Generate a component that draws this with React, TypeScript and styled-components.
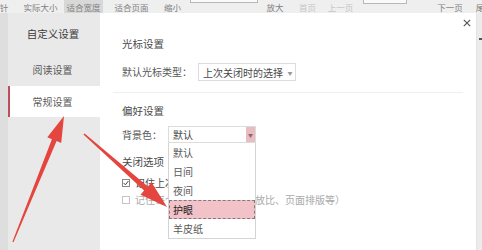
import React from "react";
import styled, { createGlobalStyle } from "styled-components";

const Global = createGlobalStyle`
  html, body { margin: 0; padding: 0; width: 482px; height: 250px; overflow: hidden; background: #e2e2e2; }
  body { font-family: "Noto Sans CJK SC", "Noto Sans", sans-serif; }
`;

const Page = styled.div`
  position: relative;
  width: 482px;
  height: 250px;
  display: flex;
  flex-direction: column;
  overflow: hidden;
`;

const Toolbar = styled.div`
  height: 13px;
  flex: none;
  display: flex;
  align-items: flex-start;
  background: #efefef;
  overflow: hidden;
`;

const ToolItem = styled.div<{ $w: number; $ml?: number; $dim?: boolean; $active?: boolean }>`
  width: ${(p) => p.$w}px;
  margin-left: ${(p) => p.$ml ?? 0}px;
  flex: none;
  height: 13px;
  font-size: 8.5px;
  line-height: 13px;
  padding-top: 1px;
  box-sizing: border-box;
  display: flex;
  justify-content: center;
  white-space: nowrap;
  color: ${(p) => (p.$dim ? "#c6c6c6" : "#808080")};
  background: ${(p) => (p.$active ? "#d8d8d8" : "transparent")};
`;

const ToolBox = styled.div<{ $w: number; $ml: number; $h: number }>`
  width: ${(p) => p.$w}px;
  height: ${(p) => p.$h}px;
  margin-left: ${(p) => p.$ml}px;
  flex: none;
  box-sizing: border-box;
  border: 1px solid #b8b8b8;
  border-top: none;
  background: #fafafa;
`;

const Body = styled.div`
  flex: 1;
  display: flex;
  min-height: 0;
`;

const Gutter = styled.div`
  width: 8px;
  flex: none;
  background: #dedede;
`;

const Dialog = styled.div`
  width: 468px;
  flex: none;
  display: flex;
  background: #fff;
  border-right: 1px solid #e2e2e2;
`;

const RightStrip = styled.div`
  flex: 1;
  background: #ececec;
  padding-top: 25px;
`;

const Tick = styled.div`
  width: 3px;
  height: 2px;
  margin-left: 2px;
  background: #555;
`;

const Sidebar = styled.div`
  width: 92px;
  flex: none;
  background: #e9e9e9;
  display: flex;
  flex-direction: column;
`;

const SideTitle = styled.div`
  height: 41px;
  display: flex;
  align-items: center;
  justify-content: center;
  padding-right: 2px;
  font-size: 10.5px;
  color: #3a3a3a;
`;

const SideItem = styled.div<{ $active?: boolean }>`
  height: 31.5px;
  display: flex;
  align-items: center;
  justify-content: center;
  box-sizing: border-box;
  padding-right: 5px;
  font-size: 10px;
  color: #5a5a5a;
  background: ${(p) => (p.$active ? "#fff" : "transparent")};
  border-left: 2px solid ${(p) => (p.$active ? "#b9505b" : "transparent")};
`;

const Content = styled.div`
  flex: 1;
  position: relative;
  padding: 24px 0 0 22px;
  display: flex;
  flex-direction: column;
  align-items: flex-start;
`;

const Close = styled.div`
  position: absolute;
  top: 6px;
  right: 5px;
  width: 8px;
  height: 8px;
  display: flex;
`;

const Heading = styled.div<{ $mt?: number }>`
  margin-top: ${(p) => p.$mt ?? 0}px;
  font-size: 10.5px;
  line-height: 14px;
  color: #4a4a4a;
`;

const Row = styled.div<{ $mt: number }>`
  margin-top: ${(p) => p.$mt}px;
  display: flex;
  align-items: center;
  gap: 6px;
`;

const Label = styled.span`
  font-size: 10px;
  line-height: 14px;
  color: #585858;
`;

const Separator = styled.div`
  margin: 11px 0 0 -9px;
  width: 350px;
  height: 1px;
  background: #efefef;
`;

const SelectWrap = styled.div`
  position: relative;
`;

const SelectBox = styled.div<{ $w: number; $h: number }>`
  width: ${(p) => p.$w}px;
  height: ${(p) => p.$h}px;
  box-sizing: border-box;
  border: 1px solid #dcdcdc;
  display: flex;
  align-items: center;
  padding-left: 4px;
  font-size: 10px;
  color: #484848;
  background: #fff;
`;

const SelectText = styled.span`
  flex: 1;
  white-space: nowrap;
`;

const Caret = styled.span<{ $pink?: boolean }>`
  align-self: stretch;
  width: ${(p) => (p.$pink ? 9 : 10)}px;
  display: flex;
  align-items: center;
  justify-content: center;
  font-size: 5px;
  color: ${(p) => (p.$pink ? "#8a6a6e" : "#999")};
  background: ${(p) => (p.$pink ? "#e9bcc2" : "transparent")};
`;

const DropList = styled.div`
  position: absolute;
  top: 100%;
  left: 0;
  width: 88px;
  box-sizing: border-box;
  border: 1px solid #d4d4d4;
  border-top: none;
  background: #fff;
  z-index: 2;
`;

const DropItem = styled.div<{ $sel?: boolean }>`
  height: 19px;
  box-sizing: border-box;
  display: flex;
  align-items: center;
  padding-left: 3px;
  font-size: 10px;
  color: ${(p) => (p.$sel ? "#222" : "#585858")};
  background: ${(p) => (p.$sel ? "#f1c3c9" : "#fff")};
  border: 1px ${(p) => (p.$sel ? "dashed #8c7478" : "solid transparent")};
`;

const CheckRow = styled.div<{ $mt?: number; $dim?: boolean }>`
  margin-top: ${(p) => p.$mt ?? 0}px;
  height: 17px;
  display: flex;
  align-items: center;
  gap: 5px;
  font-size: 10px;
  white-space: nowrap;
  color: ${(p) => (p.$dim ? "#aaa" : "#484848")};
`;

const Box = styled.span<{ $dim?: boolean }>`
  width: 8px;
  height: 8px;
  box-sizing: border-box;
  border: 1px solid ${(p) => (p.$dim ? "#c4c4c4" : "#888")};
  display: inline-flex;
  align-items: center;
  justify-content: center;
  background: #fff;
`;

const Overlay = styled.svg`
  position: absolute;
  left: 0;
  top: 0;
  width: 482px;
  height: 250px;
  pointer-events: none;
  z-index: 10;
`;

export default function App() {
  return (
    <Page>
      <Global />
      <Toolbar>
        <ToolItem $w={8}>针</ToolItem>
        <ToolItem $w={47} $ml={9}>实际大小</ToolItem>
        <ToolItem $w={39} $active>适合宽度</ToolItem>
        <ToolItem $w={57}>适合页面</ToolItem>
        <ToolItem $w={25}>缩小</ToolItem>
        <ToolBox $w={68} $ml={5} $h={3} />
        <ToolItem $w={34}>放大</ToolItem>
        <ToolItem $w={31} $dim>首页</ToolItem>
        <ToolItem $w={35} $dim>上一页</ToolItem>
        <ToolBox $w={44} $ml={5} $h={4} />
        <ToolItem $w={26} $ml={30}>下一页</ToolItem>
        <ToolItem $w={10} $ml={12}>尾</ToolItem>
      </Toolbar>
      <Body>
        <Gutter />
        <Dialog>
          <Sidebar>
            <SideTitle>自定义设置</SideTitle>
            <SideItem>阅读设置</SideItem>
            <SideItem $active>常规设置</SideItem>
          </Sidebar>
          <Content>
            <Close>
              <svg width="8" height="8" viewBox="0 0 8 8">
                <path d="M0.8 0.8 L7.2 7.2 M7.2 0.8 L0.8 7.2" stroke="#555" strokeWidth="1.2" />
              </svg>
            </Close>
            <Heading>光标设置</Heading>
            <Row $mt={12}>
              <Label>默认光标类型：</Label>
              <SelectBox $w={98} $h={18}>
                <SelectText>上次关闭时的选择</SelectText>
                <Caret>▼</Caret>
              </SelectBox>
            </Row>
            <Separator />
            <Heading $mt={11}>偏好设置</Heading>
            <Row $mt={8}>
              <Label>背景色：</Label>
              <SelectWrap>
                <SelectBox $w={88} $h={17}>
                  <SelectText>默认</SelectText>
                  <Caret $pink>▼</Caret>
                </SelectBox>
                <DropList>
                  <DropItem>默认</DropItem>
                  <DropItem>日间</DropItem>
                  <DropItem>夜间</DropItem>
                  <DropItem $sel>护眼</DropItem>
                  <DropItem>羊皮纸</DropItem>
                </DropList>
              </SelectWrap>
            </Row>
            <Heading $mt={12}>关闭选项</Heading>
            <CheckRow $mt={5}>
              <Box>
                <svg width="6" height="6" viewBox="0 0 6 6">
                  <path d="M0.6 3 L2.4 4.8 L5.4 1" fill="none" stroke="#444" strokeWidth="1" />
                </svg>
              </Box>
              记住上次打开的文档
            </CheckRow>
            <CheckRow $dim>
              <Box $dim />
              记住每个文档阅读设置（缩放比、页面排版等）
            </CheckRow>
          </Content>
        </Dialog>
        <RightStrip>
          <Tick />
        </RightStrip>
      </Body>
      <Overlay viewBox="0 0 482 250">
        <polygon
          points="13.5,242.3 56.6,141 61.2,142.9 64,116 47.3,137.3 51.9,139.2 12.4,241.8"
          fill="#e4463f"
        />
        <polygon
          points="83.4,134.6 144.1,190.6 140.5,194.8 167,207 151.5,182.2 147.9,186.4 84.6,133.4"
          fill="#e4463f"
        />
      </Overlay>
    </Page>
  );
}
